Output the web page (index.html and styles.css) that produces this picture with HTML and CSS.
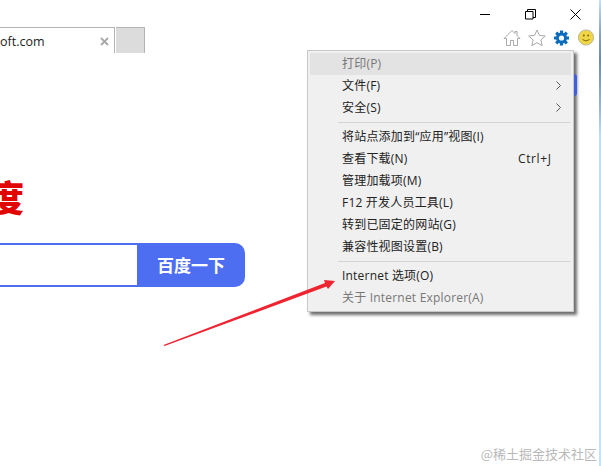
FILE: index.html
```html
<!DOCTYPE html>
<html lang="zh-CN">
<head>
<meta charset="utf-8">
<title>Internet 选项</title>
<link rel="stylesheet" href="styles.css">
</head>
<body>
<div class="tab"><span class="tab-text">oft.com</span><svg class="tab-x" width="9" height="9" viewBox="0 0 9 9"><path d="M1 1l7 7M8 1l-7 7" stroke="#a8a8a8" stroke-width="1.800" fill="none"/></svg></div>
<div class="tab-new"></div>

<div class="win-controls">
  <svg class="win-min" width="11" height="11" viewBox="0 0 11 11"><path d="M0 5.500h10" stroke="#000" fill="none"/></svg>
  <svg class="win-max" width="11" height="11" viewBox="0 0 11 11"><path d="M.5 2.500h7.500v7.500h-7.500zM2.500 2.500v-2h8v8h-2.500" stroke="#000" fill="none"/></svg>
  <svg class="win-close" width="11" height="11" viewBox="0 0 11 11"><path d="M.5 .5l10 10M10.500 .5l-10 10" stroke="#000" fill="none"/></svg>
</div>

<div class="tools">
  <svg width="18" height="18" viewBox="0 0 18 18"><path d="M9 1.500L1 9.500h2.500v7h4v-5h3v5h4v-7H17L14 6.500V2.500h-2v2z" fill="#fff" stroke="#a9a9a9" stroke-linejoin="round"/></svg>
  <svg width="18" height="18" viewBox="0 0 18 18"><path d="M9 1l2.400 5.400 5.900.6-4.400 3.900 1.300 5.800L9 13.700l-5.200 3 1.300-5.800L.7 7l5.900-.6z" fill="#fff" stroke="#a9a9a9" stroke-linejoin="round"/></svg>
  <svg width="18" height="18" viewBox="0 0 18 18"><circle cx="8.500" cy="9" r="5.500" fill="#0a6cbc"/><path d="M8.500 1.500v15M1 9h15M3.200 3.700l10.600 10.600M13.800 3.700L3.200 14.300" stroke="#0a6cbc" stroke-width="3.200"/><circle cx="8.500" cy="9" r="2.600" fill="#fff"/></svg>
  <svg width="18" height="18" viewBox="0 0 18 18"><circle cx="8" cy="8.500" r="7.600" fill="#f2d544" stroke="#b8b8a0"/><circle cx="5.800" cy="6.500" r="1" fill="#7a6a10"/><circle cx="10.200" cy="6.500" r="1" fill="#7a6a10"/><path d="M4.500 10.500q3.500 3 7 0" stroke="#7a6a10" fill="none"/></svg>
</div>

<div class="logo">度</div>
<div class="search">
  <div class="search-input"></div>
  <div class="search-btn">百度一下</div>
</div>

<div class="menu">
  <div class="item hover disabled">打印(P)</div>
  <div class="item">文件(F)<svg class="chev" width="5" height="9" viewBox="0 0 5 9"><path d="M.5 .5l4 4-4 4" stroke="#555" fill="none"/></svg></div>
  <div class="item">安全(S)<svg class="chev" width="5" height="9" viewBox="0 0 5 9"><path d="M.5 .5l4 4-4 4" stroke="#555" fill="none"/></svg></div>
  <div class="sep"></div>
  <div class="item">将站点添加到“应用”视图(I)</div>
  <div class="item">查看下载(N)<span class="key">Ctrl+J</span></div>
  <div class="item">管理加载项(M)</div>
  <div class="item">F12 开发人员工具(L)</div>
  <div class="item">转到已固定的网站(G)</div>
  <div class="item">兼容性视图设置(B)</div>
  <div class="sep"></div>
  <div class="item">Internet 选项(O)</div>
  <div class="item disabled">关于 Internet Explorer(A)</div>
</div>

<div class="sliver"></div>
<div class="edge"></div>

<svg class="arrow" width="200" height="90" viewBox="0 0 200 90"><path d="M13.500 75L175 13 174 10 185 11 178 19 176.500 16.500 14.500 76z" fill="#ee2430"/></svg>

<div class="watermark">@稀土掘金技术社区</div>
</body>
</html>
```
FILE: styles.css
```css
html, body { margin: 0; padding: 0; }
body {
  position: relative;
  width: 601px;
  height: 466px;
  overflow: hidden;
  background: #fff;
  font-family: "Open Sans", "Noto Sans CJK SC", sans-serif;
}
.tab {
  position: absolute; left: 0; top: 27px; width: 115px; height: 26px;
  border-top: 1px solid #b4b4b4; border-right: 1px solid #b4b4b4;
  box-sizing: border-box;
}
.tab-text { position: absolute; left: 0; top: 6px; font: 12.500px/16px "Open Sans", sans-serif; color: #222; }
.tab-x { position: absolute; left: 100px; top: 9px; }
.tab-new {
  position: absolute; left: 116px; top: 27px; width: 29px; height: 26px;
  box-sizing: border-box; background: #dcdcdc;
  border-top: 1px solid #b4b4b4; border-right: 1px solid #b4b4b4;
}
.win-min, .win-max, .win-close { position: absolute; top: 9px; }
.win-min { left: 480px; }
.win-max { left: 525px; }
.win-close { left: 570px; }
.tools { position: absolute; left: 503px; top: 29px; display: flex; gap: 7px; }
.sliver { position: absolute; left: 574px; top: 74px; width: 3px; height: 22px; background: #3f5fe0; border-radius: 0 3px 3px 0; }
.edge {
  position: absolute; left: 599px; top: 0; width: 2px; height: 466px;
  background: linear-gradient(#c8dff2 0, #8aa0b5 35px, #6f8ba3 60px, #9db8d0 110px, #c0dcf2 135px, #c6e2f8 466px);
}
.logo {
  position: absolute; left: -12px; top: 171px; font-family: "Noto Sans CJK SC", sans-serif;
  font-size: 36px; line-height: 50px; font-weight: 900; color: #e10602;
}
.search { position: absolute; left: 0; top: 243px; width: 245px; height: 44px; display: flex; }
.search-input {
  width: 137px; box-sizing: border-box;
  border: 2px solid #4e6ef2; border-left: 0; border-right: 0; background: #fff;
}
.search-btn {
  flex: 1; background: #4e6ef2; color: #fff; border-radius: 0 10px 10px 0;
  font-family: "Noto Sans CJK SC", sans-serif;
  font-size: 17px; font-weight: 700; line-height: 44px; text-align: center;
}
.arrow { position: absolute; left: 150px; top: 270px; }
.menu {
  position: absolute; left: 307px; top: 50px; width: 267px; height: 262px;
  box-sizing: border-box; background: #f0f0f0; border: 1px solid #c8c8c8;
  padding: 2px; box-shadow: 3px 3px 3px #6e6e6e;
}
.item {
  position: relative; height: 22px; padding-left: 32px;
  font-size: 12px; line-height: 22px; letter-spacing: .2px; color: #222; white-space: nowrap;
}
.item.hover { background: #e3e3e3; }
.item.disabled { color: #777; }
.key { position: absolute; left: 208px; top: 0; letter-spacing: .6px; }
.chev { position: absolute; right: 10px; top: 6px; }
.sep { height: 1px; margin: 3px 0 3px 28px; background: #d4d4d4; }
.watermark { position: absolute; right: 4px; top: 445px; font-size: 13px; line-height: 18px; color: #b9b9b9; font-family: "Noto Sans CJK SC", serif; }
```
